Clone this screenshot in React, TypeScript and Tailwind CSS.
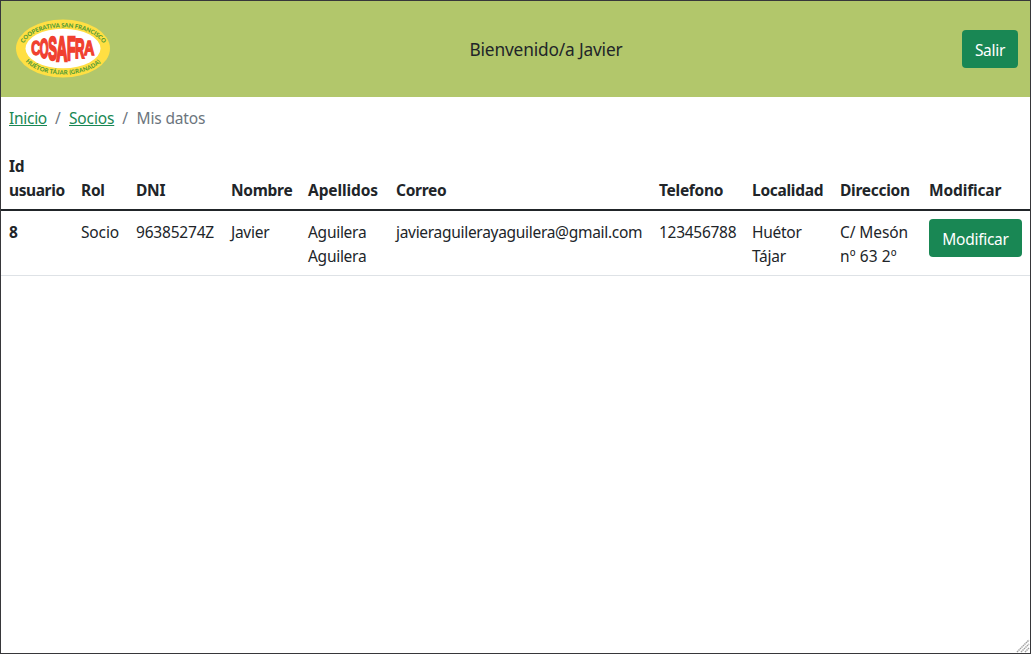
import React from "react";

const letters: { ch: string; x: number; w: number; top: number; bottom: number }[] = [
  { ch: "C", x: 16.2, w: 9.2, top: 22, bottom: 36 },
  { ch: "O", x: 24.8, w: 8.8, top: 19.5, bottom: 38.5 },
  { ch: "S", x: 33.2, w: 8.8, top: 18, bottom: 41 },
  { ch: "A", x: 41.2, w: 11.2, top: 17.5, bottom: 42 },
  { ch: "F", x: 52, w: 8.6, top: 18, bottom: 41 },
  { ch: "R", x: 60, w: 9.6, top: 19.5, bottom: 38.5 },
  { ch: "A", x: 69, w: 10.4, top: 21.5, bottom: 36 },
];

const glyphWidths: Record<string, number> = { C: 7.22, O: 7.78, S: 6.67, A: 7.22, F: 6.11, R: 7.22 };

function Logo() {
  return (
    <svg width="96" height="60" viewBox="0 0 96 60" aria-label="Cosafra">
      <defs>
        <path id="arcTop" d="M8.5 24.5 C 21 3, 74 3, 88 24.5" />
        <path id="arcBottom" d="M10.5 42.5 C 26 60, 71 60, 87 42" />
      </defs>
      <ellipse cx="48" cy="29.5" rx="47" ry="29" fill="#ffdf43" />
      <ellipse cx="48" cy="29.5" rx="37.5" ry="19.8" fill="#fff" />
      <g fill="#f0402f" stroke="#f0402f" strokeWidth="0.7" fontFamily="Liberation Sans" fontWeight="700" fontSize="10">
        {letters.map((l, i) => (
          <text
            key={i}
            transform={`translate(${l.x} ${l.bottom}) scale(${l.w / glyphWidths[l.ch]} ${(l.bottom - l.top) / 7.1})`}
          >
            {l.ch}
          </text>
        ))}
      </g>
      <g fill="#4f9a35" fontFamily="Lato, Liberation Sans" fontWeight="900" fontSize="6">
        <text>
          <textPath href="#arcTop" textLength="89">COOPERATIVA SAN FRANCISCO</textPath>
        </text>
        <text>
          <textPath href="#arcBottom" textLength="81">HUÉTOR TÁJAR (GRANADA)</textPath>
        </text>
      </g>
    </svg>
  );
}

const button =
  "h-[38px] rounded-[4px] bg-[#198754] text-center leading-[40px] text-white";

export default function App() {
  return (
    <div className="flex h-[654px] w-[1031px] flex-col border border-[#37373a] bg-white font-['Noto_Sans',sans-serif] text-[15.5px] leading-6 tracking-[-0.28px] text-[#212529]">
      <header className="flex h-24 shrink-0 items-center bg-[#b2c76b] pr-3 pl-[14px]">
        <div className="w-[200px] shrink-0">
          <Logo />
        </div>
        <p className="flex-1 pt-0.5 pl-[59px] text-center text-[17.3px] tracking-[-0.16px]">
          Bienvenido/a Javier
        </p>
        <div className="flex w-[200px] shrink-0 justify-end">
          <button className={`${button} w-14`}>Salir</button>
        </div>
      </header>

      <nav className="mb-[15px] flex shrink-0 px-2 pt-[9px]">
        <a className="w-[60px] text-[#198754]" href="#inicio">
          <span className="underline">Inicio</span>
          <span className="inline-block pl-2 text-[#6c757d]">/</span>
        </a>
        <a className="w-[67.5px] text-[#198754]" href="#socios">
          <span className="tracking-[-0.15px] underline">Socios</span>
          <span className="inline-block pl-2 text-[#6c757d]">/</span>
        </a>
        <span className="tracking-[-0.15px] text-[#6c757d]">Mis datos</span>
      </nav>

      <table className="w-[1029px] shrink-0 table-fixed border-separate border-spacing-0 text-left">
        <colgroup>
          <col className="w-[72px]" />
          <col className="w-[55px]" />
          <col className="w-[95px]" />
          <col className="w-[77px]" />
          <col className="w-[88px]" />
          <col className="w-[263px]" />
          <col className="w-[93px]" />
          <col className="w-[88px]" />
          <col className="w-[89px]" />
          <col className="w-[109px]" />
        </colgroup>
        <thead>
          <tr className="align-bottom [&>th]:border-b-2 [&>th]:border-[#212529] [&>th]:pt-[9px] [&>th]:pb-[7px] [&>th]:pl-2 [&>th]:font-bold">
            <th className="tracking-[-0.4px]">Id<br />usuario</th>
            <th>Rol</th>
            <th>DNI</th>
            <th>Nombre</th>
            <th className="tracking-[-0.1px]">Apellidos</th>
            <th>Correo</th>
            <th>Telefono</th>
            <th>Localidad</th>
            <th>Direccion</th>
            <th className="tracking-[-0.15px]">Modificar</th>
          </tr>
        </thead>
        <tbody>
          <tr className="align-top [&>*]:border-b [&>*]:border-[#dee2e6] [&>*]:pt-[9px] [&>*]:pb-[7px] [&>*]:pl-2 [&>td:last-child]:pt-2">
            <th className="font-bold">8</th>
            <td className="tracking-[-0.15px]">Socio</td>
            <td className="tracking-[-0.2px]">96385274Z</td>
            <td>Javier</td>
            <td>Aguilera<br />Aguilera</td>
            <td className="tracking-[-0.3px]">javieraguilerayaguilera@gmail.com</td>
            <td>123456788</td>
            <td>Huétor<br />Tájar</td>
            <td>
              <span className="tracking-[-0.1px]">C/ Mesón</span>
              <br />
              <span className="tracking-[0.1px]">nº 63 2º</span>
            </td>
            <td>
              <button className={`${button} block w-[93px]`}>Modificar</button>
            </td>
          </tr>
        </tbody>
      </table>

      <div className="mt-auto flex justify-end">
        <svg width="14" height="14" viewBox="0 0 14 14" stroke="#a0a0a0" strokeWidth="1.5" strokeDasharray="1.5 0.6">
          <path d="M1 13 L13 1 M5 13 L13 5 M9 13 L13 9" />
        </svg>
      </div>
    </div>
  );
}
